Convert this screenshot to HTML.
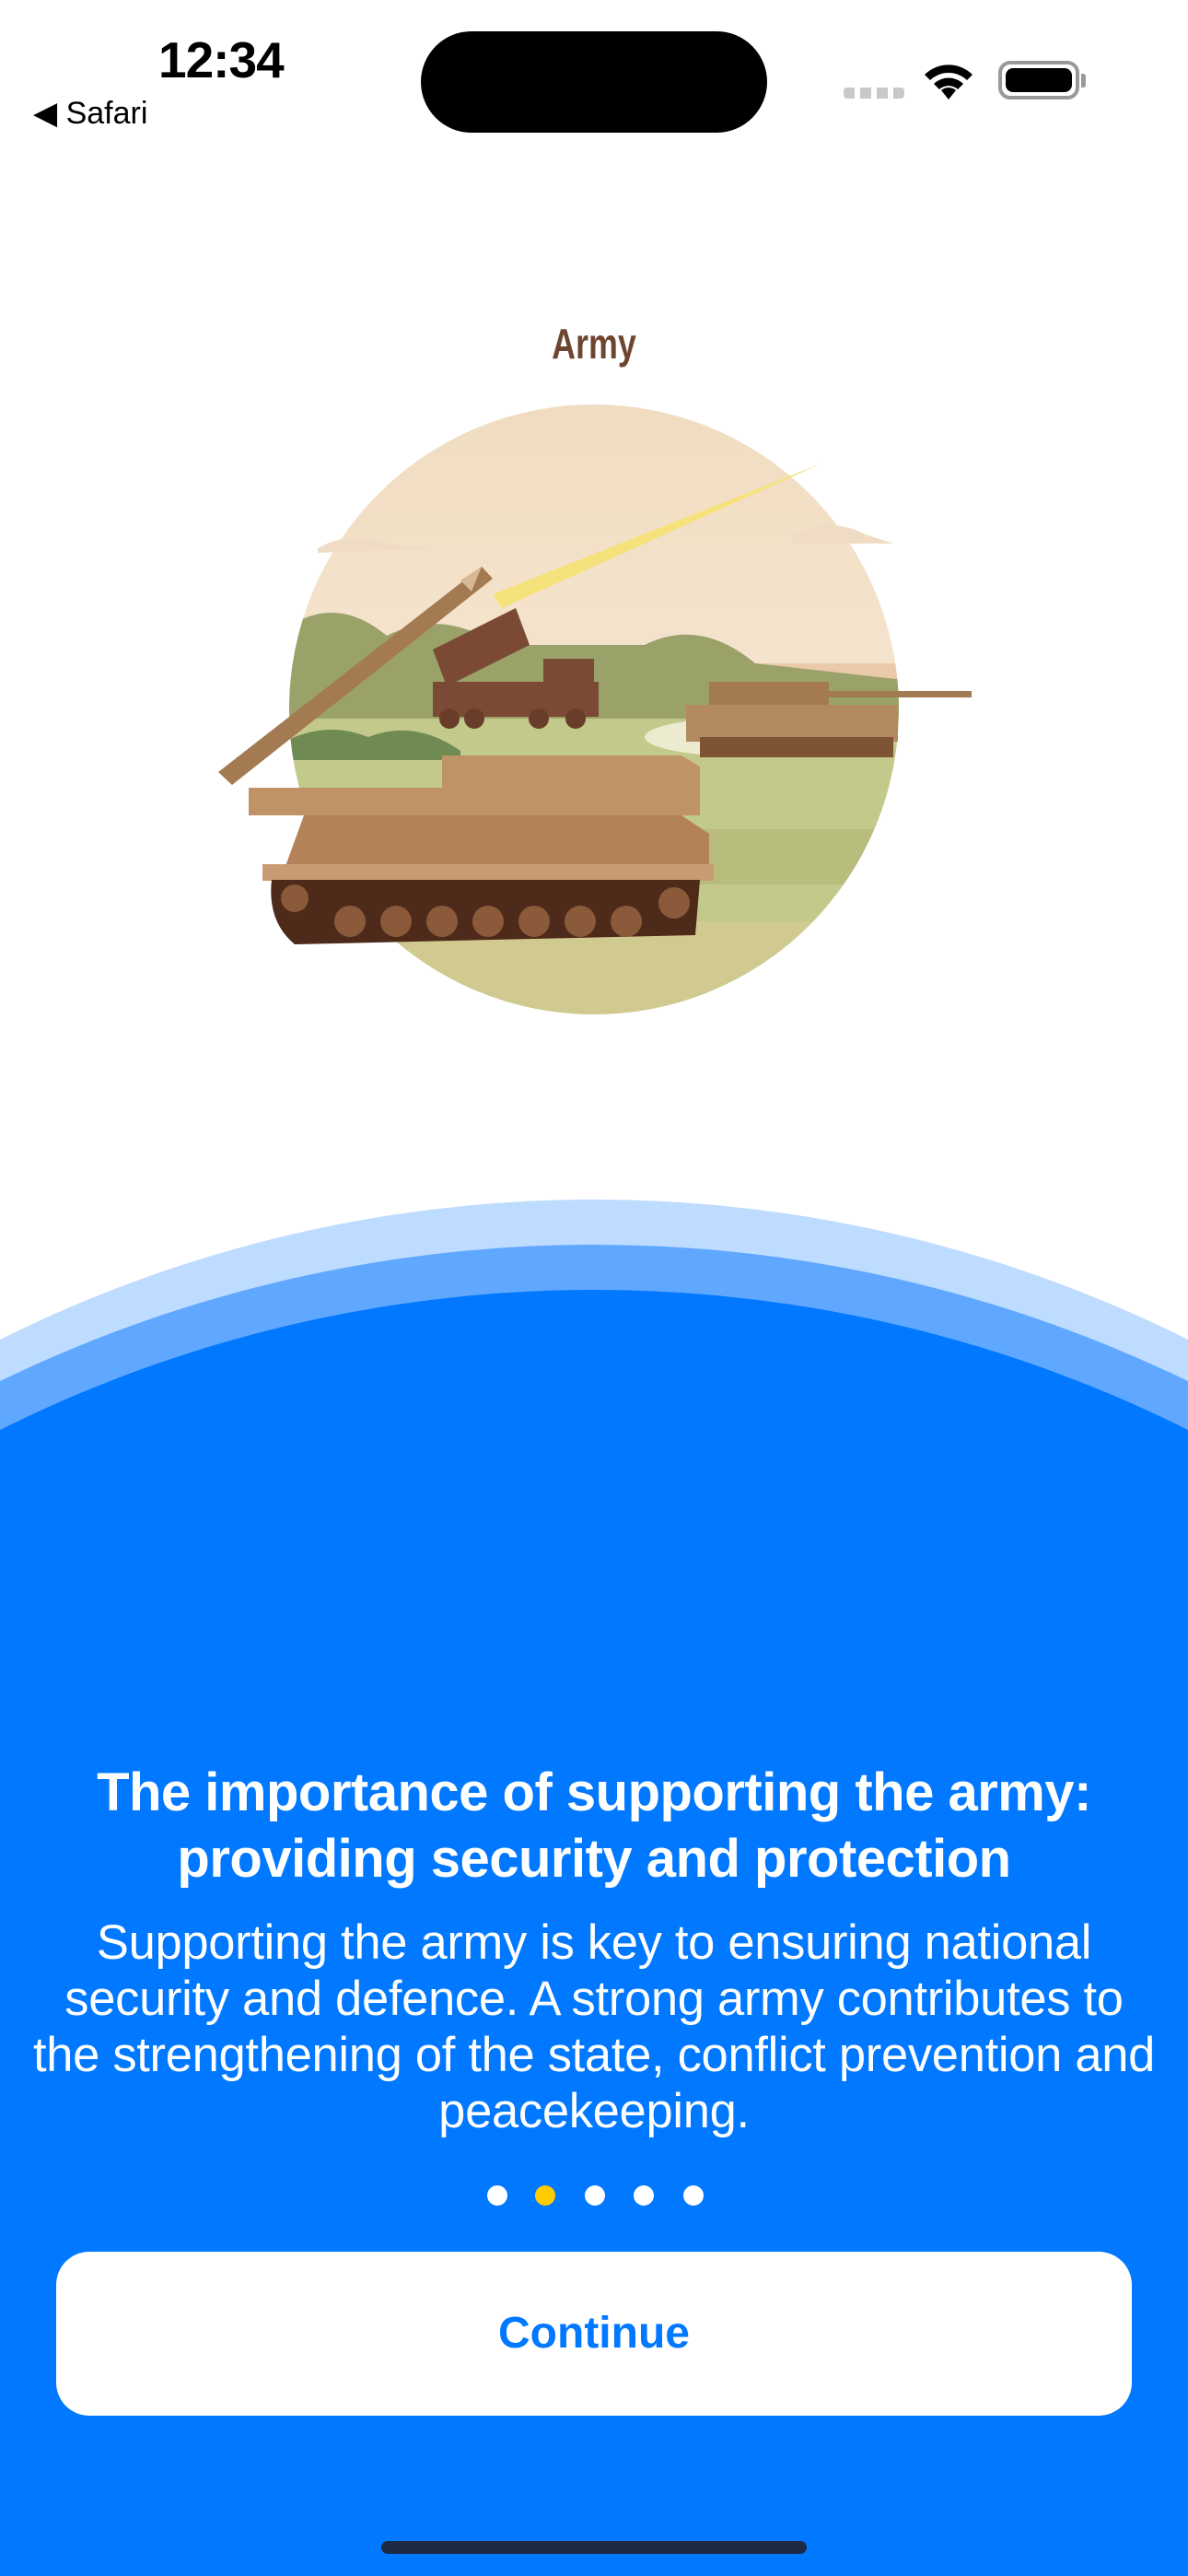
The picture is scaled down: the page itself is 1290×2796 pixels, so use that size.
<!DOCTYPE html>
<html><head><meta charset="utf-8"><style>
*{margin:0;padding:0;box-sizing:border-box}
html,body{width:1290px;height:2796px;overflow:hidden}
body{background:#fff;position:relative;font-family:"Liberation Sans",sans-serif}
.abs{position:absolute}
.t{left:0;width:1290px;text-align:center;color:#fff}
</style></head><body>
<div class="abs" style="left:172px;top:33px;font-size:55px;font-weight:bold;color:#000;letter-spacing:-1px">12:34</div>
<div class="abs" style="left:36px;top:103px;font-size:34px;color:#000">&#9664;&#xFE0E; Safari</div>
<div class="abs" style="left:457px;top:34px;width:376px;height:110px;border-radius:55px;background:#000"></div>
<div class="abs" style="left:916px;top:95px;width:66px;height:12px;background:repeating-linear-gradient(90deg,#c8c8c8 0 12px,transparent 12px 18px);border-radius:4px"></div>
<svg class="abs" style="left:1000px;top:64px" width="60" height="46" viewBox="0 0 60 46"><path d="M30 44 L22 34 A12 12 0 0 1 38 34 Z" fill="#000"/><path d="M14 27 A23 23 0 0 1 46 27 L40 33 A15 15 0 0 0 20 33Z" fill="#000"/><path d="M4 17 A37 37 0 0 1 56 17 L50 23 A29 29 0 0 0 10 23Z" fill="#000"/></svg>
<div class="abs" style="left:1084px;top:66px;width:88px;height:42px;border:4px solid #999;border-radius:13px;padding:4px"><div style="width:100%;height:100%;background:#000;border-radius:8px"></div></div>
<div class="abs" style="left:1174px;top:80px;width:5px;height:15px;background:#999;border-radius:0 3px 3px 0"></div>
<div class="abs t" style="top:346px;color:#6e4530;font-size:46px;font-weight:bold;transform:scaleX(0.78)">Army</div>
<svg class="abs" style="left:0;top:0" width="1290" height="1200" viewBox="0 0 1290 1200">
<defs><clipPath id="c"><circle cx="645" cy="770" r="331"/></clipPath>
<linearGradient id="sky" x1="0" y1="0" x2="0" y2="1"><stop offset="0" stop-color="#f0dcc0"/><stop offset="1" stop-color="#fbeee0"/></linearGradient></defs>
<g clip-path="url(#c)">
<rect x="300" y="430" width="700" height="700" fill="url(#sky)"/>
<rect x="300" y="720" width="700" height="60" fill="#e9c9aa"/>
<path d="M300 690 Q360 640 420 690 Q480 660 540 700 L700 700 Q760 670 820 720 L1000 740 L1000 800 L300 800Z" fill="#9aa26a"/>
<rect x="300" y="780" width="700" height="400" fill="#c3c98a"/>
<rect x="300" y="900" width="700" height="60" fill="#b8bd7e"/>
<rect x="300" y="1000" width="700" height="130" fill="#d1ca90"/>
<path d="M300 810 Q350 780 400 800 Q450 780 500 815 L500 825 L300 825Z" fill="#6f8a52"/>
<ellipse cx="820" cy="800" rx="120" ry="22" fill="#ecebd0"/>
</g>
<path d="M345 595 Q380 575 420 590 L470 595 L345 600Z" fill="#f0dcc4"/>
<path d="M860 580 Q900 560 940 580 L970 590 L860 590Z" fill="#f0dcc4"/>
<path d="M535 645 L892 503 L545 660Z" fill="#f5e27a"/>
<path d="M470 705 L560 660 L575 700 L485 745Z" fill="#7a4a34"/>
<rect x="470" y="740" width="180" height="38" fill="#7a4a34"/><rect x="590" y="715" width="55" height="40" fill="#7a4a34"/>
<g fill="#6a3d2a"><circle cx="488" cy="780" r="11"/><circle cx="515" cy="780" r="11"/><circle cx="585" cy="780" r="11"/><circle cx="625" cy="780" r="11"/></g>
<rect x="770" y="740" width="130" height="35" fill="#a37a52"/><rect x="745" y="765" width="230" height="40" fill="#b38a60"/>
<rect x="890" y="750" width="165" height="7" fill="#a37a52"/>
<rect x="760" y="800" width="210" height="22" fill="#7d5535"/>
<path d="M237 838 L523 615 L535 628 L252 852Z" fill="#a37a52"/>
<path d="M500 630 L523 615 L512 642Z" fill="#d8b894"/>
<rect x="270" y="855" width="300" height="30" fill="#c09367"/>
<path d="M480 820 L740 820 L760 832 L760 885 L480 885Z" fill="#c09367"/>
<path d="M330 885 L740 885 L770 905 L770 940 L310 940Z" fill="#b38259"/>
<rect x="285" y="938" width="490" height="18" fill="#c89c72"/>
<path d="M295 955 L760 955 L755 1015 L320 1025 Q290 1000 295 955Z" fill="#4e2a1a"/>
<g fill="#8a5a3a"><circle cx="380" cy="1000" r="17"/><circle cx="430" cy="1000" r="17"/><circle cx="480" cy="1000" r="17"/><circle cx="530" cy="1000" r="17"/><circle cx="580" cy="1000" r="17"/><circle cx="630" cy="1000" r="17"/><circle cx="680" cy="1000" r="17"/><circle cx="732" cy="980" r="17"/><circle cx="320" cy="975" r="15"/></g>
</svg>
<svg class="abs" style="left:0;top:1290px" width="1290" height="1506" viewBox="0 1290 1290 1506">
<circle cx="645" cy="2746" r="1444" fill="#bedcff"/>
<circle cx="645" cy="2830" r="1479" fill="#60a8ff"/>
<circle cx="645" cy="2844" r="1444" fill="#0078ff"/>
</svg>
<div class="abs" style="left:0;top:2000px;width:1290px;height:796px;background:#0078ff"></div>
<div class="abs t" style="top:1910px;font-size:58px;font-weight:bold;line-height:72px;letter-spacing:-0.5px">The importance of supporting the army:<br>providing security and protection</div>
<div class="abs t" style="top:2078px;font-size:52.5px;line-height:61px;letter-spacing:-0.3px">Supporting the army is key to ensuring national<br>security and defence. A strong army contributes to<br>the strengthening of the state, conflict prevention and<br>peacekeeping.</div>
<div class="abs" style="left:529px;top:2372px;width:22px;height:22px;border-radius:50%;background:#fff"></div>
<div class="abs" style="left:581px;top:2372px;width:22px;height:22px;border-radius:50%;background:#ffcc00"></div>
<div class="abs" style="left:635px;top:2372px;width:22px;height:22px;border-radius:50%;background:#fff"></div>
<div class="abs" style="left:688px;top:2372px;width:22px;height:22px;border-radius:50%;background:#fff"></div>
<div class="abs" style="left:742px;top:2372px;width:22px;height:22px;border-radius:50%;background:#fff"></div>
<div class="abs" style="left:61px;top:2444px;width:1168px;height:178px;border-radius:36px;background:#fff;color:#0078ff;font-size:48px;font-weight:bold;text-align:center;line-height:178px">Continue</div>
<div class="abs" style="left:414px;top:2758px;width:462px;height:14px;border-radius:7px;background:#1c2a44"></div>
</body></html>
